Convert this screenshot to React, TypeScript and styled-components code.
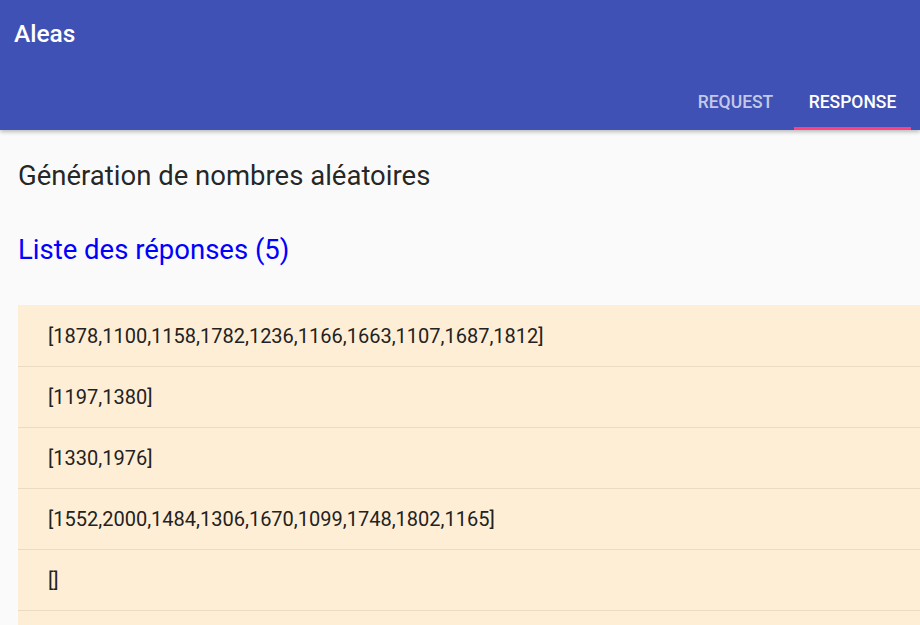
import React, { useState } from "react";
import styled, { createGlobalStyle } from "styled-components";

const responses: number[][] = [
  [1878, 1100, 1158, 1782, 1236, 1166, 1663, 1107, 1687, 1812],
  [1197, 1380],
  [1330, 1976],
  [1552, 2000, 1484, 1306, 1670, 1099, 1748, 1802, 1165],
  [],
];

function App() {
  const [tab, setTab] = useState("response");

  return (
    <>
      <GlobalStyle />
      <Header>
        <Toolbar>
          <AppTitle>Aleas</AppTitle>
        </Toolbar>
        <Tabs>
          <Tab active={tab === "request"} onClick={() => setTab("request")}>
            Request
          </Tab>
          <Tab active={tab === "response"} onClick={() => setTab("response")}>
            Response
          </Tab>
        </Tabs>
      </Header>
      <Main>
        <Heading>Génération de nombres aléatoires</Heading>
        <SubHeading>Liste des réponses ({responses.length})</SubHeading>
        <List>
          {responses.map((r, i) => (
            <Row key={i}>{JSON.stringify(r)}</Row>
          ))}
        </List>
      </Main>
    </>
  );
}

const GlobalStyle = createGlobalStyle`
  html, body {
    margin: 0;
    padding: 0;
    background: #fafafa;
    font-family: Roboto, "Noto Sans", sans-serif;
    overflow: hidden;
  }
`;

const Header = styled.header`
  height: 130px;
  background: #3f51b5;
  color: white;
  display: flex;
  flex-direction: column;
  justify-content: space-between;
  box-shadow: 0 2px 4px rgba(0, 0, 0, 0.25);
  position: relative;
  z-index: 1;
`;

const Toolbar = styled.div`
  height: 66px;
  display: flex;
  align-items: center;
  padding: 0 14px;
`;

const AppTitle = styled.h1`
  margin: 0;
  font-size: 24.5px;
  font-weight: 500;
`;

const Tabs = styled.nav`
  display: flex;
  justify-content: flex-end;
  padding-right: 9px;
`;

const Tab = styled.button<{ active?: boolean }>`
  width: 117px;
  height: 48px;
  border: none;
  background: transparent;
  font-family: Roboto, sans-serif;
  font-size: 17.5px;
  font-weight: 500;
  text-transform: uppercase;
  color: ${(p) => (p.active ? "#ffffff" : "rgba(255, 255, 255, 0.7)")};
  border-bottom: 3px solid ${(p) => (p.active ? "#ff4081" : "transparent")};
  padding: 0 0 6px;
  cursor: pointer;
`;

const Main = styled.main`
  padding: 30px 0 0 18px;
`;

const Heading = styled.h2`
  margin: 0;
  font-size: 27.5px;
  line-height: 32px;
  font-weight: 400;
  color: rgba(0, 0, 0, 0.87);
`;

const SubHeading = styled.h3`
  margin: 42px 0 0;
  font-size: 27.5px;
  line-height: 32px;
  font-weight: 400;
  color: #0000ff;
`;

const List = styled.ul`
  list-style: none;
  margin: 39px 0 0;
  padding: 1px 0 40px;
  background: #ffeed6;
`;

const Row = styled.li`
  height: 60px;
  display: flex;
  align-items: center;
  padding-left: 30px;
  font-size: 20px;
  color: #222;
  border-bottom: 1px solid #eadbc1;
`;

export default App;
